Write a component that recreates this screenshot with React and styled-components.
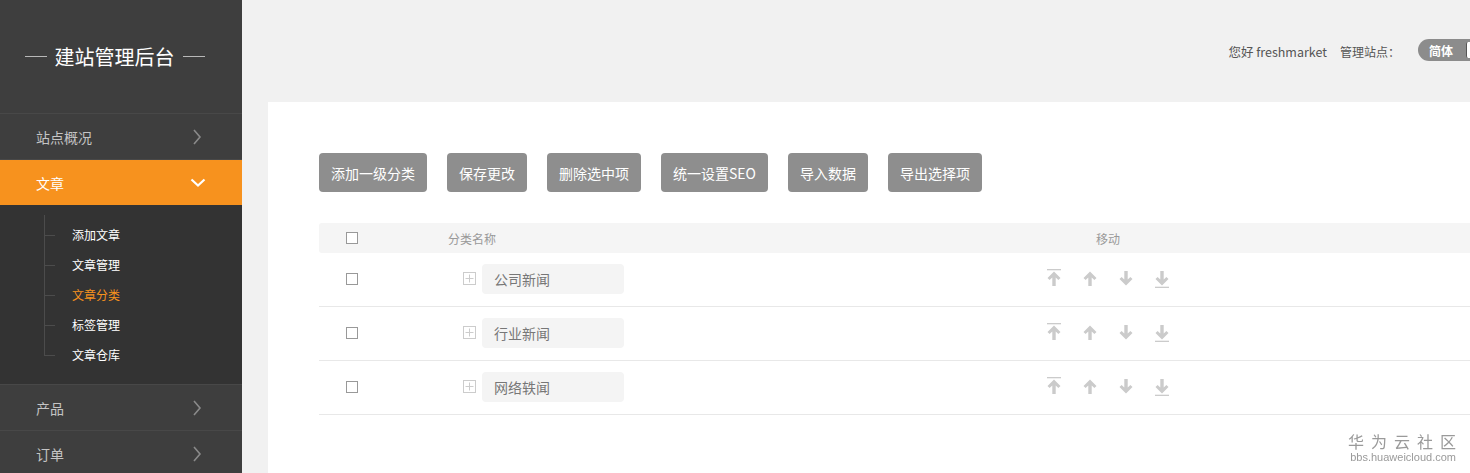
import styled, { createGlobalStyle } from "styled-components";

const GlobalStyle = createGlobalStyle`
  html, body {
    margin: 0;
    padding: 0;
    height: 100%;
    overflow: hidden;
    background: #f1f1f1;
  }
  body {
    font-family: "Noto Sans CJK SC", "Noto Sans", sans-serif;
  }
  * {
    box-sizing: border-box;
  }
`;

const Page = styled.div`
  display: flex;
  width: 1572px;
  height: 473px;
`;

/* ---------- sidebar ---------- */

const Sidebar = styled.aside`
  width: 242px;
  flex-shrink: 0;
  background: #3e3e3e;
  display: flex;
  flex-direction: column;
`;

const Brand = styled.div`
  height: 114px;
  flex-shrink: 0;
  display: flex;
  align-items: center;
  justify-content: center;
  padding-right: 13px;
  gap: 8px;
  color: #fff;
  font-size: 20px;
  line-height: 24px;
  border-bottom: 1px solid #484848;
`;

const BrandLine = styled.span`
  width: 22px;
  height: 1px;
  background: #b8b8b8;
`;

const MenuItem = styled.div`
  height: ${(p) => (p.$active ? "45px" : "46px")};
  flex-shrink: 0;
  display: flex;
  align-items: center;
  justify-content: space-between;
  padding: 0 40px 0 36px;
  font-size: 14px;
  color: ${(p) => (p.$active ? "#fff" : "#c4c4c4")};
  background: ${(p) => (p.$active ? "#f7921e" : "#3e3e3e")};
  border-bottom: ${(p) => (p.$active ? "none" : "1px solid #484848")};
`;

const SubMenu = styled.div`
  position: relative;
  flex-shrink: 0;
  background: #333;
  padding: 15px 0 14px;
  border-bottom: 1px solid #484848;

  &::before {
    content: "";
    position: absolute;
    left: 44px;
    top: 10px;
    bottom: 28px;
    width: 1px;
    background: #4c4c4c;
  }
`;

const SubItem = styled.div`
  position: relative;
  height: 30px;
  line-height: 30px;
  padding-left: 72px;
  font-size: 12px;
  color: ${(p) => (p.$active ? "#f7921e" : "#fff")};

  &::before {
    content: "";
    position: absolute;
    left: 44px;
    top: 15px;
    width: 11px;
    height: 1px;
    background: #4c4c4c;
  }
`;

const ChevronRight = () => (
  <svg width="10" height="16" viewBox="0 0 10 16">
    <polyline points="2,1 8,8 2,15" fill="none" stroke="#8a8a8a" strokeWidth="1.6" />
  </svg>
);

const ChevronDown = () => (
  <svg width="16" height="10" viewBox="0 0 16 10" style={{ marginRight: "-4px" }}>
    <polyline points="1.5,1.5 8,7.5 14.5,1.5" fill="none" stroke="#fff" strokeWidth="2.2" />
  </svg>
);

/* ---------- main ---------- */

const Main = styled.main`
  flex: 1;
  display: flex;
  flex-direction: column;
  background: #f1f1f1;
`;

const TopBar = styled.header`
  height: 102px;
  flex-shrink: 0;
  display: flex;
  align-items: center;
  justify-content: flex-end;
  padding-right: 64px;
  font-size: 12px;
  color: #555;
`;

const Greeting = styled.span`
  margin-right: 13px;
  font-size: 12.5px;
`;

const SiteLabel = styled.span`
  margin-right: 18px;
`;

const LangPill = styled.div`
  display: flex;
  align-items: center;
  height: 22px;
  margin-top: -2px;
  border-radius: 11px;
  background: #8c8c8c;
  padding: 0 2px 0 11px;
  color: #fff;
  font-size: 12px;
  font-weight: bold;
`;

const LangKnob = styled.span`
  margin-left: 13px;
  width: 40px;
  height: 16px;
  border-radius: 2px;
  background: #fff;
  border-left: 1px solid #555;
`;

const Panel = styled.section`
  flex: 1;
  margin-left: 26px;
  background: #fff;
  padding: 51px 51px 0 51px;
`;

const Toolbar = styled.div`
  display: flex;
  gap: 20px;
`;

const Button = styled.button`
  height: 39px;
  padding: 0 12px;
  border: none;
  border-radius: 4px;
  background: #8e8e8e;
  color: #fff;
  font-family: inherit;
  font-size: 14px;
  cursor: pointer;
`;

const Table = styled.div`
  margin-top: 31px;
`;

const HeadRow = styled.div`
  display: flex;
  align-items: center;
  height: 30px;
  background: #f5f5f5;
  border-radius: 3px;
  font-size: 12px;
  color: #999;
`;

const Row = styled.div`
  display: flex;
  align-items: center;
  height: 54px;
  padding-bottom: 2px;
  border-bottom: 1px solid #e8e8e8;
`;

const CheckCell = styled.div`
  width: 66px;
  display: flex;
  justify-content: center;
`;

const NameCell = styled.div`
  width: 615px;
  display: flex;
  align-items: center;
  gap: 6px;
  padding-left: ${(p) => (p.$head ? "63px" : "78px")};
`;

const MoveCell = styled.div`
  width: 216px;
  display: flex;
  align-items: center;
  justify-content: center;
  gap: 20px;
`;

const Checkbox = styled.span`
  width: 12px;
  height: 12px;
  border: 1px solid #999;
  background: #fff;
`;

const NameBox = styled.div`
  width: 142px;
  height: 30px;
  line-height: 30px;
  padding-left: 12px;
  border-radius: 4px;
  background: #f4f4f4;
  font-size: 14px;
  color: #777;
`;

const PlusBox = () => (
  <svg width="13" height="13" viewBox="0 0 13 13">
    <rect x="0.5" y="0.5" width="12" height="12" fill="none" stroke="#ccc" />
    <line x1="6.5" y1="2.5" x2="6.5" y2="10.5" stroke="#ccc" />
    <line x1="2.5" y1="6.5" x2="10.5" y2="6.5" stroke="#ccc" />
  </svg>
);

const arrowPath =
  "M8 2.5 L14.5 9 L12.4 11.1 L9.7 8.4 L9.7 17 L6.3 17 L6.3 8.4 L3.6 11.1 L1.5 9 Z";

const MoveArrow = ({ dir, bar }) => (
  <svg width="16" height="19" viewBox="0 0 16 19">
    <g transform={dir === "down" ? "rotate(180 8 9.5)" : undefined} fill="#cbcbcb">
      <path d={arrowPath} />
      {bar && <rect x="1" y="0" width="14" height="1.3" />}
    </g>
  </svg>
);

const Watermark = styled.div`
  position: fixed;
  right: 14px;
  bottom: 9px;
  display: flex;
  flex-direction: column;
  align-items: flex-end;
  color: #9a9a9a;
`;

const WatermarkTitle = styled.span`
  font-size: 16px;
  line-height: 18px;
  letter-spacing: 7px;
  margin-right: -7px;
`;

const WatermarkUrl = styled.span`
  font-family: "Liberation Sans", sans-serif;
  font-size: 11px;
  line-height: 14px;
`;

const subItems = ["添加文章", "文章管理", "文章分类", "标签管理", "文章仓库"];
const buttons = ["添加一级分类", "保存更改", "删除选中项", "统一设置SEO", "导入数据", "导出选择项"];
const categories = ["公司新闻", "行业新闻", "网络轶闻"];

export default function App() {
  return (
    <>
      <GlobalStyle />
      <Page>
        <Sidebar>
          <Brand>
            <BrandLine />
            建站管理后台
            <BrandLine />
          </Brand>
          <MenuItem>
            站点概况
            <ChevronRight />
          </MenuItem>
          <MenuItem $active>
            文章
            <ChevronDown />
          </MenuItem>
          <SubMenu>
            {subItems.map((s) => (
              <SubItem key={s} $active={s === "文章分类"}>
                {s}
              </SubItem>
            ))}
          </SubMenu>
          <MenuItem>
            产品
            <ChevronRight />
          </MenuItem>
          <MenuItem>
            订单
            <ChevronRight />
          </MenuItem>
        </Sidebar>

        <Main>
          <TopBar>
            <Greeting>您好 freshmarket</Greeting>
            <SiteLabel>管理站点：</SiteLabel>
            <LangPill>
              简体
              <LangKnob />
            </LangPill>
          </TopBar>

          <Panel>
            <Toolbar>
              {buttons.map((b) => (
                <Button key={b}>{b}</Button>
              ))}
            </Toolbar>

            <Table>
              <HeadRow>
                <CheckCell>
                  <Checkbox />
                </CheckCell>
                <NameCell $head>分类名称</NameCell>
                <MoveCell>移动</MoveCell>
              </HeadRow>
              {categories.map((c) => (
                <Row key={c}>
                  <CheckCell>
                    <Checkbox />
                  </CheckCell>
                  <NameCell>
                    <PlusBox />
                    <NameBox>{c}</NameBox>
                  </NameCell>
                  <MoveCell>
                    <MoveArrow dir="up" bar />
                    <MoveArrow dir="up" />
                    <MoveArrow dir="down" />
                    <MoveArrow dir="down" bar />
                  </MoveCell>
                </Row>
              ))}
            </Table>
          </Panel>
        </Main>
      </Page>
      <Watermark>
        <WatermarkTitle>华为云社区</WatermarkTitle>
        <WatermarkUrl>bbs.huaweicloud.com</WatermarkUrl>
      </Watermark>
    </>
  );
}
